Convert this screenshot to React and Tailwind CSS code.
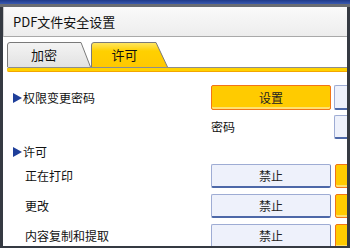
import React from 'react';

const Tab = ({ label, active, width, slant }) => {
    const w = width;
    const path = `M0.5,25 V3 Q0.5,0.5 3,0.5 H${w - slant} L${w - 0.5},25`;
    return (
        <div className="relative h-[25px] flex items-center shrink-0" style={{ width: w }}>
            <svg className="absolute inset-0" width={w} height="25" viewBox={`0 0 ${w} 25`}>
                <defs>
                    <linearGradient id="tabYellow" x1="0" y1="0" x2="0" y2="1">
                        <stop offset="0" stopColor="#ffe766" />
                        <stop offset="0.35" stopColor="#ffd000" />
                        <stop offset="1" stopColor="#ffc800" />
                    </linearGradient>
                    <linearGradient id="tabGray" x1="0" y1="0" x2="0" y2="1">
                        <stop offset="0" stopColor="#f4f4f4" />
                        <stop offset="1" stopColor="#e2e2e2" />
                    </linearGradient>
                </defs>
                <path d={path} fill={active ? 'url(#tabYellow)' : 'url(#tabGray)'} stroke="#7a7a7a" strokeWidth="1" />
            </svg>
            <span className="relative w-full text-center pr-[10px] text-[13px] text-[#111]">{label}</span>
        </div>
    );
};

const Arrow = () => (
    <svg width="9" height="10" viewBox="0 0 9 10" className="mr-[1px]">
        <path d="M0,0 L9,5 L0,10 Z" fill="#1f3f9a" />
    </svg>
);

const GrayButton = ({ children, className = '' }) => (
    <div className={`h-full flex items-center justify-center rounded-[2px] bg-[#eef1fb] border border-[#9eacd4] border-b-[2px] border-b-[#4d68a8] border-r-[#6f86bd] text-[12px] text-[#222] ${className}`}>
        {children}
    </div>
);

const OrangeButton = ({ children, className = '' }) => (
    <div className={`h-full flex items-center justify-center rounded-[2px] bg-[#ffcb00] border border-[#f27418] shadow-[inset_0_-2px_0_#ffe070] text-[12px] text-[#222] ${className}`}>
        {children}
    </div>
);

const Row = ({ label, indent, right, children, className = '' }) => (
    <div className={`flex items-center h-[24px] shrink-0 ${className}`}>
        <div className={`w-[208px] shrink-0 h-full flex items-center ${indent ? 'pl-[22px]' : 'pl-[10px]'}`}>
            {label}
        </div>
        <div className="w-[120px] shrink-0 h-full">{children}</div>
        <div className="ml-[3px] w-[40px] h-full shrink-0">{right}</div>
    </div>
);

const App = () => {
    return (
        <div className="w-[350px] h-[248px] overflow-hidden flex flex-col bg-[#353a42] font-['Noto_Sans_CJK_SC','Noto_Sans',sans-serif] text-[12px] text-[#111]">
            <div className="h-[4px] shrink-0 bg-[linear-gradient(#1f3a8a,#3a5ab0)]" />
            <div className="h-[3px] shrink-0 bg-[#6a6d72]" />
            <div className="flex-1 flex min-h-0 ml-[3px] mr-[3px] mb-[2px] bg-white overflow-hidden">
                <div className="flex-1 flex flex-col min-w-0">
                    <div className="h-[30px] shrink-0 flex items-center pl-[9px] bg-[linear-gradient(#fafafa,#ededed)] border-b border-[#a9a9a9] border-l border-l-[#c8c8c8] text-[13px]">
                        PDF文件安全设置
                    </div>
                    <div className="flex items-end pt-[5px] pl-[4px] shrink-0">
                        <Tab label="加密" width={84} slant={10} />
                        <Tab label="许可" active width={77} slant={12} />
                    </div>
                    <div className="ml-[4px] h-[5px] shrink-0 rounded-l-[2px] border-t border-[#8d8d8d] bg-[#ffd200] border-b border-b-[#f3a600]" />

                    <Row
                        className="mt-[13px] h-[25px]"
                        label={<span className="flex items-center"><Arrow />权限变更密码</span>}
                        right={<GrayButton className="rounded-r-none" />}
                    >
                        <OrangeButton>设置</OrangeButton>
                    </Row>
                    <Row
                        className="mt-[5px]"
                        label={null}
                        right={<GrayButton className="rounded-r-none" />}
                    >
                        <div className="h-full flex items-center">密码</div>
                    </Row>
                    <div className="h-[25px] shrink-0 flex items-center pl-[10px]">
                        <Arrow />许可
                    </div>
                    <Row
                        label="正在打印"
                        indent
                        right={<OrangeButton className="ml-[1px] rounded-r-none" />}
                    >
                        <GrayButton>禁止</GrayButton>
                    </Row>
                    <Row
                        className="mt-[6px]"
                        label="更改"
                        indent
                        right={<OrangeButton className="ml-[1px] rounded-r-none" />}
                    >
                        <GrayButton>禁止</GrayButton>
                    </Row>
                    <Row
                        className="mt-[6px]"
                        label="内容复制和提取"
                        indent
                        right={<OrangeButton className="ml-[1px] rounded-r-none" />}
                    >
                        <GrayButton>禁止</GrayButton>
                    </Row>
                </div>
            </div>
        </div>
    );
};

export default App;
